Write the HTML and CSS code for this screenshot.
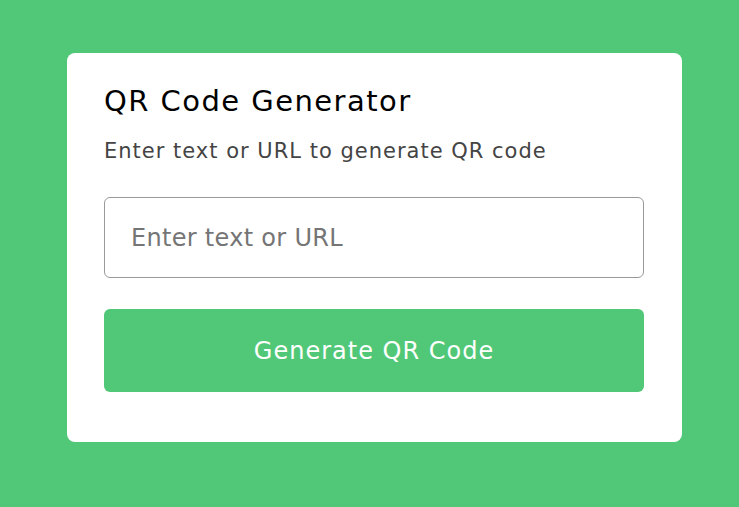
FILE: index.html
```html
<!DOCTYPE html>
<html lang="en">
<head>
<meta charset="utf-8">
<title>QR Code Generator</title>
<link rel="stylesheet" href="styles.css">
</head>
<body>
<div class="card">
  <h1 class="title">QR Code Generator</h1>
  <p class="subtitle">Enter text or URL to generate QR code</p>
  <input class="field" type="text" placeholder="Enter text or URL">
  <button class="btn" type="button">Generate QR Code</button>
</div>
</body>
</html>
```
FILE: styles.css
```css
* { box-sizing: border-box; }
html, body { margin: 0; padding: 0; }
body {
  background: #51c878;
  width: 739px;
  height: 507px;
  font-family: "DejaVu Sans", "Open Sans", sans-serif;
  padding: 53px 0 0 67px;
}
.card {
  width: 615px;
  height: 389px;
  background: #fff;
  border-radius: 8px;
  padding: 28px 38px 0 37px;
  display: flex;
  flex-direction: column;
}
.title {
  margin: 0;
  font-size: 29px;
  font-weight: 400;
  line-height: 40px;
  letter-spacing: 1.45px;
  color: #000;
}
.subtitle {
  margin: 15px 0 0;
  font-size: 21px;
  line-height: 30px;
  letter-spacing: 1px;
  color: #444;
}
.field {
  margin-top: 31px;
  height: 81px;
  width: 540px;
  border: 1px solid #999;
  border-radius: 6px;
  padding: 0 26px;
  font-family: inherit;
  font-size: 24px;
  letter-spacing: 0.3px;
  color: #333;
  outline: none;
}
.field::placeholder { color: #757575; }
.btn {
  margin-top: 31px;
  height: 83px;
  width: 540px;
  border: none;
  border-radius: 6px;
  background: #51c878;
  color: #fff;
  font-family: inherit;
  font-size: 24px;
  letter-spacing: 1px;
}
```
